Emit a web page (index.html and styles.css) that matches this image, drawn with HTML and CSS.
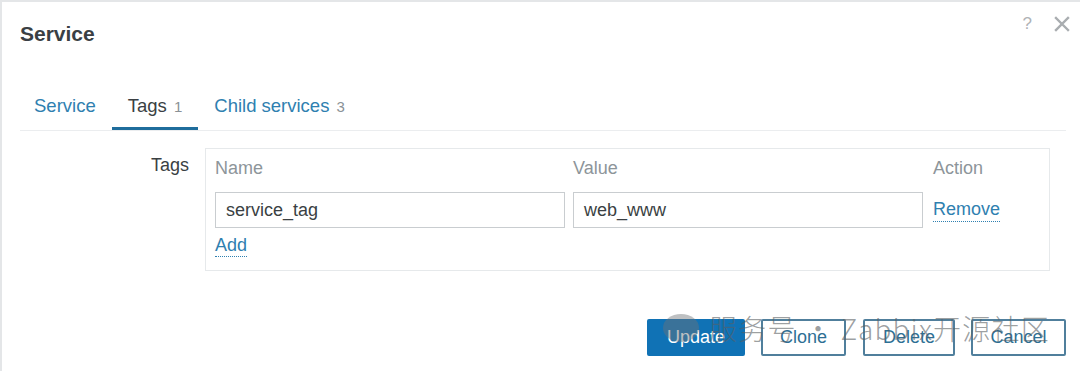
FILE: index.html
```html
<!DOCTYPE html>
<html>
<head>
<meta charset="utf-8">
<link rel="stylesheet" href="styles.css">
</head>
<body>
<div class="dialog">
  <div class="header">
    <h1 class="title">Service</h1>
    <div class="header-actions">
      <span class="help">?</span>
      <span class="close">
        <svg width="16" height="16" viewBox="0 0 16 16"><path d="M2 2 L14 14 M14 2 L2 14" stroke="#a9adb0" stroke-width="2.4" stroke-linecap="square"/></svg>
      </span>
    </div>
  </div>

  <div class="tabs">
    <a class="tab">Service</a>
    <a class="tab active">Tags <span class="count">1</span></a>
    <a class="tab">Child services <span class="count">3</span></a>
  </div>

  <div class="form">
    <div class="form-label">Tags</div>
    <div class="tags-box">
      <div class="tags-grid">
        <div class="th">Name</div>
        <div class="th">Value</div>
        <div class="th">Action</div>
        <div class="input">service_tag</div>
        <div class="input">web_www</div>
        <div class="action"><a class="link">Remove</a></div>
        <div class="add-cell"><a class="link">Add</a></div>
      </div>
    </div>
  </div>

  <div class="footer">
    <button class="btn primary btn-update">Update</button>
    <button class="btn btn-clone">Clone</button>
    <button class="btn btn-delete">Delete</button>
    <button class="btn btn-cancel">Cancel</button>
    <div class="watermark">
      <span class="wm-icon"></span>
      <span class="wm-text">服务号 · Zabbix开源社区</span>
    </div>
  </div>
</div>
</body>
</html>
```

FILE: styles.css
```css
html, body {
  margin: 0;
  padding: 0;
  background: #ffffff;
}

body {
  width: 1080px;
  height: 371px;
  overflow: hidden;
  font-family: "Liberation Sans", Arial, sans-serif;
  color: #3a3f43;
}

.dialog {
  box-sizing: border-box;
  width: 1080px;
  height: 371px;
  border-top: 2px solid #e4e6e8;
  border-left: 2px solid #e4e6e8;
  padding: 0 14px 0 18px;
  position: relative;
}

.header {
  display: flex;
  justify-content: space-between;
  align-items: flex-start;
  height: 46px;
}

.title {
  margin: 20px 0 0 0;
  font-size: 21px;
  line-height: 24px;
  font-weight: bold;
  color: #3a3f44;
}

.header-actions {
  display: flex;
  align-items: center;
  gap: 22px;
  margin-top: 12px;
  margin-right: -4px;
}

.help {
  font-size: 17px;
  line-height: 20px;
  color: #b0b3b6;
}

.close {
  display: flex;
  width: 16px;
  height: 16px;
}

.tabs {
  display: flex;
  margin-top: 38px;
  border-bottom: 1px solid #ebedef;
}

.tab {
  padding: 9px 16px 9px 16px;
  font-size: 18.5px;
  line-height: 22px;
  color: #2f80b0;
  border-bottom: 3px solid transparent;
  white-space: nowrap;
}

.tab:first-child {
  padding-left: 14px;
}

.tab.active {
  color: #3a3f43;
  border-bottom-color: #1f6d9c;
}

.count {
  font-size: 15px;
  color: #8a9196;
  margin-left: 2px;
}

.form {
  display: grid;
  grid-template-columns: 169px 845px;
  column-gap: 16px;
  margin-top: 17px;
}

.form-label {
  text-align: right;
  font-size: 18px;
  line-height: 22px;
  padding-top: 6px;
  color: #3a3f43;
}

.tags-box {
  box-sizing: border-box;
  border: 1px solid #e6e9eb;
  height: 123px;
  padding: 8px 10px 0 9px;
}

.tags-grid {
  display: grid;
  grid-template-columns: 350px 350px 110px;
  column-gap: 8px;
  row-gap: 0;
}

.tags-grid > :nth-child(3n+3) {
  margin-left: 2px;
}

.th {
  font-size: 18px;
  line-height: 22px;
  color: #8d959a;
  height: 35px;
}

.input {
  box-sizing: border-box;
  height: 36px;
  border: 1px solid #c9cdd0;
  padding: 0 10px;
  font-size: 18px;
  line-height: 34px;
  color: #3a3f43;
}

.action {
  display: flex;
  align-items: center;
  height: 36px;
}

.add-cell {
  grid-column: 1 / 2;
  padding-top: 6px;
  line-height: 22px;
}

.link {
  font-size: 18px;
  line-height: 22px;
  color: #2f80b0;
  text-decoration: none;
  border-bottom: 1px dotted #2f80b0;
  padding-bottom: 1px;
}

.footer {
  display: flex;
  justify-content: flex-end;
  gap: 16px;
  margin-top: 48px;
  position: relative;
}

.btn {
  box-sizing: border-box;
  height: 37px;
  padding: 0;
  text-align: center;
  font-family: "Liberation Sans", Arial, sans-serif;
  font-size: 18px;
  color: #2e6f94;
  background: #ffffff;
  border: 2px solid #507f9c;
  border-radius: 2px;
}

.btn.primary {
  background: #1072b5;
  border-color: #1072b5;
  color: #ffffff;
}

.btn-update { width: 98px; }
.btn-clone { width: 85px; }
.btn-delete { width: 92px; margin-left: 1px; }
.btn-cancel { width: 95px; }

.watermark {
  position: absolute;
  left: 643px;
  top: -8px;
  display: flex;
  align-items: center;
  gap: 10px;
  pointer-events: none;
}

.wm-icon {
  width: 36px;
  height: 28px;
  border-radius: 50%;
  background: rgba(110, 115, 120, 0.45);
}

.wm-text {
  font-family: "Noto Sans CJK SC", "Noto Sans", sans-serif;
  font-weight: 300;
  font-size: 28px;
  line-height: 34px;
  color: rgba(90, 95, 100, 0.6);
  letter-spacing: 1.2px;
  white-space: nowrap;
}
```
